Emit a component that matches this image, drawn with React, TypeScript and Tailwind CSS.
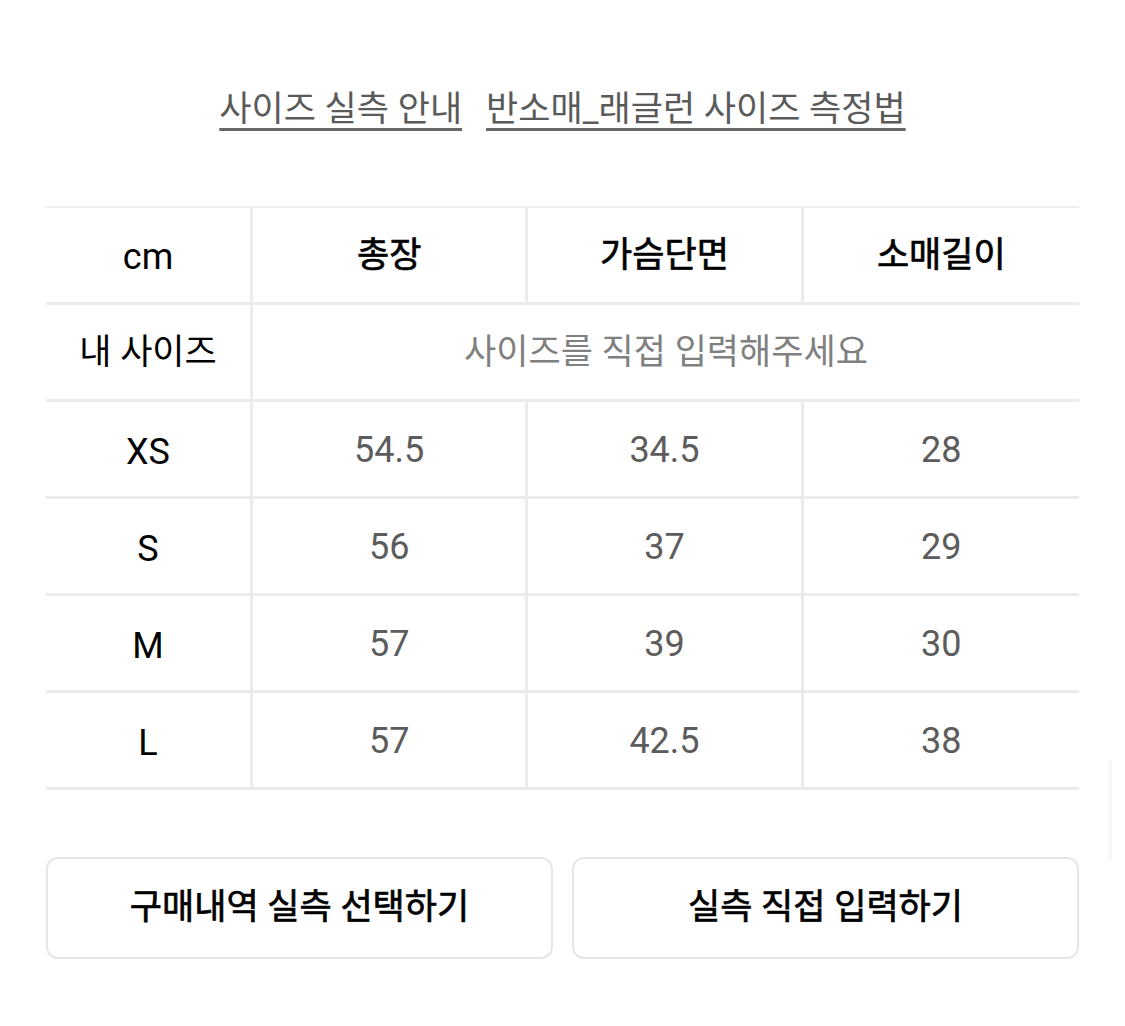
import React from 'react';

const rows = [
  { size: 'XS', values: ['54.5', '34.5', '28'] },
  { size: 'S', values: ['56', '37', '29'] },
  { size: 'M', values: ['57', '39', '30'] },
  { size: 'L', values: ['57', '42.5', '38'] },
];

const headers = ['총장', '가슴단면', '소매길이'];

export default function App() {
  return (
    <div className="w-[1125px] h-[1026px] bg-white font-['Roboto','Noto_Sans_CJK_KR',sans-serif] text-[35px] relative">
      {/* guide links */}
      <div className="flex justify-center gap-[24px] pt-[89px] text-[#5a5a5a] leading-[42px]">
        <span className="underline decoration-[3px] underline-offset-[7px] decoration-[#666]">사이즈 실측 안내</span>
        <span className="underline decoration-[3px] underline-offset-[7px] decoration-[#666]">반소매_래글런 사이즈 측정법</span>
      </div>

      {/* size table */}
      <div className="mx-[46px] mt-[75px] border-t-2 border-[#f0f0f0] grid grid-cols-[207px_1fr_1fr_1fr]">
        <div className="h-[97px] pt-[4px] flex items-center justify-center border-b-[3px] border-r-[3px] border-[#ebebeb] text-black text-[36px]">cm</div>
        {headers.map((h, i) => (
          <div
            key={h}
            className={`h-[97px] pt-[2px] flex items-center justify-center border-b-[3px] border-[#ebebeb] text-black [-webkit-text-stroke:0.7px_black] ${i < 2 ? 'border-r-[3px]' : ''}`}
          >
            {h}
          </div>
        ))}

        <div className="h-[97px] pt-[2px] flex items-center justify-center border-b-[3px] border-r-[3px] border-[#ebebeb] text-black">내 사이즈</div>
        <div className="col-span-3 h-[97px] pt-[2px] flex items-center justify-center border-b-[3px] border-[#ebebeb] text-[#808080]">
          사이즈를 직접 입력해주세요
        </div>

        {rows.map((r) => (
          <React.Fragment key={r.size}>
            <div className="h-[97px] pt-[6px] flex items-center justify-center border-b-[3px] border-r-[3px] border-[#ebebeb] text-black text-[36px]">
              {r.size}
            </div>
            {r.values.map((v, i) => (
              <div
                key={i}
                className={`h-[97px] pt-[2px] flex items-center justify-center border-b-[3px] border-[#ebebeb] text-[#5c5c5c] text-[36px] ${i < 2 ? 'border-r-[3px]' : ''}`}
              >
                {v}
              </div>
            ))}
          </React.Fragment>
        ))}
      </div>

      {/* actions */}
      <div className="mx-[46px] mt-[67px] grid grid-cols-2 gap-[19px]">
        <button className="h-[102px] rounded-[12px] border-2 border-[#e6e6e6] bg-white text-black [-webkit-text-stroke:0.7px_black]">
          구매내역 실측 선택하기
        </button>
        <button className="h-[102px] rounded-[12px] border-2 border-[#e6e6e6] bg-white text-black [-webkit-text-stroke:0.7px_black]">
          실측 직접 입력하기
        </button>
      </div>

      {/* scroll indicator */}
      <div className="absolute left-[1108px] top-[760px] w-[4px] h-[100px] bg-[#f7f7f7] rounded-full" />
    </div>
  );
}
